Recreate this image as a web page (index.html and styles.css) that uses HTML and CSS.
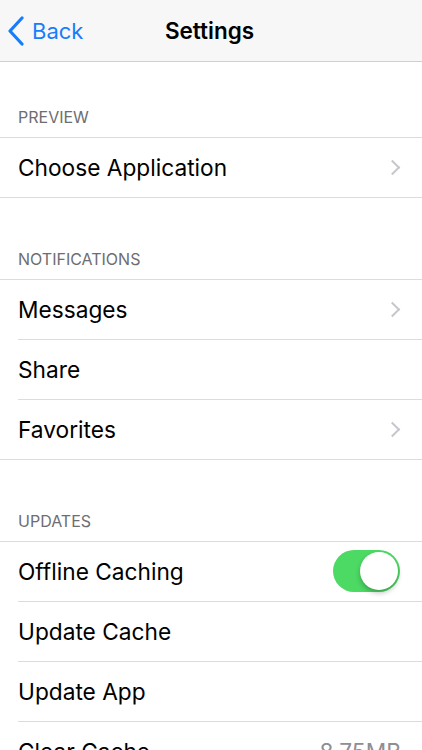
FILE: index.html
```html
<!DOCTYPE html>
<html lang="en">
  <head>
  	<meta charset="utf-8">
  	<title>Settings</title>
  	<link rel="stylesheet" href="styles.css">
  </head>
<body>

	<div class="nav">
		<a class="back">
			<svg width="18" height="30" viewBox="0 0 18 30"><path d="M15 2 L3 15 L15 28" fill="none" stroke="#157efb" stroke-width="3.2" stroke-linecap="round" stroke-linejoin="round"/></svg>
			<span>Back</span>
		</a>
		<div class="title">Settings</div>
	</div>

	<div class="header first">PREVIEW</div>
	<div class="group">
		<div class="row"><span>Choose Application</span><i class="chev"></i></div>
	</div>

	<div class="header">NOTIFICATIONS</div>
	<div class="group">
		<div class="row"><span>Messages</span><i class="chev"></i></div>
		<div class="row"><span>Share</span></div>
		<div class="row"><span>Favorites</span><i class="chev"></i></div>
	</div>

	<div class="header">UPDATES</div>
	<div class="group">
		<div class="row"><span>Offline Caching</span><div class="toggle on"><b></b></div></div>
		<div class="row"><span>Update Cache</span></div>
		<div class="row"><span>Update App</span></div>
		<div class="row"><span>Clear Cache</span><span class="value">8.75MB</span></div>
	</div>

</body>
</html>
```

FILE: styles.css
```css
body {
	margin: 0;
	background: #fff;
	font-family: Inter, "Liberation Sans", sans-serif;
	color: #000;
}
.nav {
	position: relative;
	height: 61px;
	background: #f7f7f7;
	border-bottom: 1px solid #cfcfd3;
	display: flex;
	align-items: center;
	justify-content: center;
}
.back {
	position: absolute;
	left: 7px;
	top: 16px;
	display: flex;
	align-items: center;
	gap: 7px;
	color: #157efb;
	font-size: 22px;
}
.back svg {
	display: block;
}
.title {
	font-size: 22.5px;
	font-weight: 600;
	margin-right: 3px;
}
.header {
	height: 81px;
	box-sizing: border-box;
	padding: 0 18px 10px;
	display: flex;
	align-items: flex-end;
	font-size: 16px;
	color: #6d6d72;
}
.header.first {
	height: 75px;
}
.group {
	border-top: 1px solid #dcdce0;
	border-bottom: 1px solid #dcdce0;
}
.row {
	height: 59px;
	margin-left: 18px;
	padding-right: 21px;
	display: flex;
	align-items: center;
	justify-content: space-between;
	font-size: 22.7px;
	border-top: 1px solid #dcdce0;
}
.row:first-child {
	border-top: none;
}
.chev {
	width: 9px;
	height: 9px;
	border-top: 2px solid #c7c7cc;
	border-right: 2px solid #c7c7cc;
	transform: rotate(45deg);
	margin-right: 3px;
}
.value {
	color: #8e8e93;
}
.toggle {
	width: 67px;
	height: 42px;
	border-radius: 21px;
	background: #4cd964;
	position: relative;
	margin-right: 1px;
	margin-top: -2px;
}
.toggle b {
	position: absolute;
	right: 2px;
	top: 2px;
	width: 38px;
	height: 38px;
	border-radius: 50%;
	background: #fff;
	box-shadow: 0 3px 5px rgba(0,0,0,0.25);
}
```
